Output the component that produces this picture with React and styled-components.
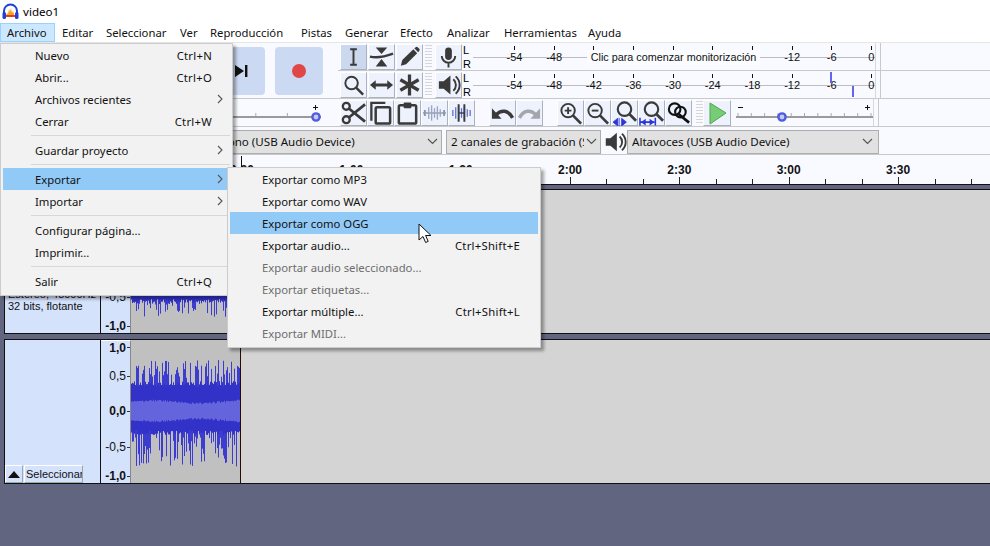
import React from "react";
import styled, { createGlobalStyle } from "styled-components";

const UI = '"Noto Sans", "Open Sans", sans-serif';
const ARIAL = '"Liberation Sans", Arial, sans-serif';

const Global = createGlobalStyle`
  html, body { margin: 0; padding: 0; background: #62657f; }
  * { box-sizing: border-box; }
`;

const Page = styled.div`
  position: relative; width: 990px; height: 546px; overflow: hidden;
  font-family: ${UI}; font-size: 11.3px; color: #111; background: #62657f;
`;
const TitleBar = styled.div`
  height: 22px; background: #fff; display: flex; align-items: center; gap: 4px; padding-left: 2px; font-size: 11.6px; color: #000;
`;
const MenuBar = styled.div`
  height: 21px; background: #fff; display: flex; align-items: flex-start; padding-top: 1px; border-bottom: 1px solid #e6e6e6;
`;
const MenuItem = styled.div`
  width: ${p => p.$w}px; flex: none; height: 19px; line-height: 19px; padding-left: 7px; white-space: nowrap;
  outline: ${p => (p.$open ? "1px solid #99d1ff" : "none")};
  outline-offset: -1px;
  background: ${p => (p.$open ? "#cce8ff" : "transparent")};
`;

const Dock = styled.div`
  display: grid; grid-template-columns: 338px 1fr; grid-template-rows: 28px 28px 28px 28px;
  background: #f8faff;
`;
const Transport = styled.div`
  grid-row: 1 / 3; display: flex; justify-content: flex-end; align-items: flex-start; gap: 10px;
  padding: 4px 15px 0 0; border-bottom: 1px solid #c9c9c9;
`;
const TransportBtn = styled.div`
  width: 48px; height: 48px; border-radius: 4px; background: #ccd9f2;
  display: flex; align-items: center; justify-content: center;
`;
const GainCell = styled.div`
  display: flex; justify-content: flex-end; align-items: stretch; border-bottom: 1px solid #c9c9c9; padding-right: 17px;
`;
const DockRow = styled.div`
  display: flex; align-items: center; padding-left: 2px; border-bottom: 1px solid #c9c9c9; position: relative;
`;
const DeviceRow = styled.div`
  grid-column: 1 / 3; display: flex; align-items: center; padding: 2px 0 0 188px; border-bottom: 1px solid #c9c9c9;
`;
const ToolBtn = styled.div`
  width: ${p => p.$w || 27}px; height: 26px; flex: none; display: flex; align-items: center; justify-content: center;
  background: ${p => (p.$active ? "#cbd8ee" : "#edf2fc")};
  border: 1px solid; border-color: #fff #aab2c0 #aab2c0 #fff;
  margin-right: ${p => p.$mr || 0}px;
`;
const Grip = styled.div`
  width: ${p => p.$w || 7}px; height: 24px; flex: none; margin: 0 ${p => p.$mr ?? 3}px 0 ${p => p.$ml ?? 1}px;
  background: repeating-linear-gradient(to bottom, #d4d6da 0 1px, transparent 1px 3px);
`;
const LR = styled.div`
  width: 11px; height: 28px; flex: none; font: 11px/14px ${ARIAL}; color: #000; padding-left: 1px;
`;
const Meter = styled.div`
  position: relative; width: 402px; height: 27px; flex: none; display: flex; justify-content: space-between;
  padding: 3px 3px 0 41px;
  &::before { content: ""; position: absolute; left: 0; right: 0; top: 14px; height: 1px; background: #bdbdbd; }
`;
const MeterTick = styled.div`
  position: relative; width: 1px; height: 4px; background: #111; flex: none;
`;
const MeterLabel = styled.span`
  position: absolute; left: 50%; top: 5px; transform: translateX(-50%); font: 11px/13px ${ARIAL}; color: #111; white-space: nowrap;
`;
const MonitorBox = styled.div`
  position: absolute; left: 114px; top: 7px; width: 173px; height: 15px; background: #fbfcff;
  text-align: center; font: 10.8px/14px ${ARIAL}; color: #111; white-space: nowrap;
`;
const Peak = styled.div`
  position: absolute; width: 2px; height: 11px; background: #6464ec;
`;
const DockEnd = styled.div`
  width: 6px; align-self: stretch; flex: none; border-right: 1px solid #c9c9c9; border-left: 1px solid #d8d8d8;
`;
const Select = styled.div`
  height: 24px; width: ${p => p.$w}px; flex: none; margin-right: ${p => p.$mr || 0}px; padding: 0 ${p => p.$pr || 3}px 0 4px;
  background: #e1e1e1; border: 1px solid #adadad; display: flex; justify-content: space-between; align-items: center;
  white-space: nowrap; overflow: hidden; font-size: 11.6px;
  & > svg { flex: none; }
`;
const SelectText = styled.span` overflow: hidden; flex: 1; min-width: 0; margin-right: 2px; `;
const SliderWrap = styled.div`
  width: ${p => p.$w}px; flex: none; height: 27px; margin-left: ${p => p.$ml || 0}px;
`;

const Ruler = styled.div`
  position: relative; height: 29px; background: #f8faff;
`;
const RulerLabel = styled.span`
  position: absolute; top: 8px; transform: translateX(-50%); font: bold 12px/15px ${ARIAL}; color: #111;
`;
const RulerTick = styled.i`
  position: absolute; bottom: 0; width: 1px; height: ${p => (p.$major ? 7 : 5)}px; background: #222;
`;
const RulerCursor = styled.i`
  position: absolute; left: 241px; top: 1px; width: 1px; height: 11px; background: #111;
`;
const Tracks = styled.div`
  border-top: 1px solid #111; padding: 4px 0 0 4px; background: #62657f;
`;
const Track = styled.div`
  display: flex; height: ${p => p.$h}px; background: #d4d4d4; border: solid #111; border-width: 1px 0 1px 1px;
  margin-bottom: 5px;
`;
const Panel = styled.div`
  width: 96px; flex: none; background: #d4e2fc; border-right: 1px solid #111; display: flex; flex-direction: column;
  justify-content: flex-end; font: 11px/12px ${ARIAL}; color: #111;
`;
const PanelInfo = styled.div`
  flex: 1; padding: 98px 0 0 3px; white-space: nowrap;
`;
const PanelFoot = styled.div`
  display: flex; height: 18px; gap: 1px;
`;
const Collapse = styled.div`
  width: 18px; background: #d4e2fc; border: 1px solid; border-color: #fff #9aa #9aa #fff;
  display: flex; align-items: center; justify-content: center;
`;
const SelectBtn = styled.div`
  width: 59px; background: #d4e2fc; border: 1px solid; border-color: #fff #9aa #9aa #fff;
  font: 11px/16px ${ARIAL}; padding-left: 1px; overflow: hidden; white-space: nowrap;
`;
const Scale = styled.div`
  width: 30px; flex: none; background: #d4e2fc; border-right: 1px solid #888; border-top: 1px solid #fff;
  display: grid; grid-template-rows: 13px 44px 26px 46px 12px;
`;
const ScaleLabel = styled.div`
  display: flex; align-items: center; justify-content: flex-end; font: ${p => (p.$bold ? "bold" : "normal")} 12px/14px ${ARIAL};
  color: #111; white-space: nowrap;
  &::after { content: ""; width: 3px; height: 1px; background: #333; margin-left: 1px; flex: none; }
`;
const Clip = styled.div`
  width: 110px; flex: none; background: #c0c0c0; border-right: 1px solid #2a0a0a; overflow: hidden;
`;
const Overlay = styled.div`
  position: absolute; left: ${p => p.$x}px; top: ${p => p.$y}px; width: ${p => p.$w}px; z-index: ${p => p.$z || 5};
  background: #f2f2f2; border: 1px solid #cccccc; padding: 0 2px 3px; box-shadow: 3px 3px 3px rgba(0,0,0,.35);
`;
const Row = styled.div`
  display: grid; grid-template-columns: ${p => p.$text}px 1fr ${p => p.$tail}px; align-items: center; height: 22px;
  padding-left: ${p => p.$pad}px; background: ${p => (p.$hi ? "#91c9f7" : "transparent")};
  color: ${p => (p.$off ? "#6d6d6d" : "#111")}; white-space: nowrap;
`;
const Shortcut = styled.span` text-align: right; letter-spacing: .25px; `;
const Arrow = styled.span` display: flex; justify-content: flex-end; padding-right: 7px; `;
const Separator = styled.div`
  height: 1px; background: #d7d7d7; margin: 3px 0 3px 28px;
`;
const Cursor = styled.svg`
  position: absolute; left: 418px; top: 223px; z-index: 9;
`;

const INK = "#3a3a3a";
const Svg = ({ children, s = 26 }) => <svg width={s} height={s} viewBox="0 0 26 26">{children}</svg>;

const AppIcon = () => (
  <svg width="17" height="17" viewBox="0 0 17 17">
    <path d="M2 11V8a6.5 6.5 0 0 1 13 0v3" fill="none" stroke="#1f3fd6" strokeWidth="2" />
    <rect x="0.5" y="9" width="3.5" height="7" rx="1.5" fill="#1f3fd6" />
    <rect x="13" y="9" width="3.5" height="7" rx="1.5" fill="#1f3fd6" />
    <path d="M4 13l1-3 1 1 1-5 1 3 1-4 1 5 1-2 1 3v3H4z" fill="#f2a01e" />
    <rect x="4" y="12" width="9" height="2" fill="#e2401c" />
  </svg>
);
const IBeam = () => <Svg><path d="M9.5 5h7M13 5v16M9.5 21h7" stroke={INK} strokeWidth="2" fill="none" /></Svg>;
const Envelope = () => (
  <Svg>
    <path d="M7 3h12l-6 7zM13 15l6 8H7z" fill={INK} />
    <path d="M1 12.5c8 2 16 0 24-3" stroke={INK} strokeWidth="2.4" fill="none" />
  </Svg>
);
const Pencil = () => <Svg><path d="M4 22l1.5-6L17 5l4 4L9.5 20.5zM18 4l1.5-1.2a1.5 1.5 0 0 1 2 0l1.7 1.7a1.5 1.5 0 0 1 0 2L22 8z" fill={INK} /></Svg>;
const Lens = () => <Svg><circle cx="11" cy="11" r="6.5" fill="none" stroke={INK} strokeWidth="2" /><path d="M16 16l7 7" stroke={INK} strokeWidth="2.6" /></Svg>;
const Shift = () => <Svg><path d="M1 13l6-5v3.5h12V8l6 5-6 5v-3.5H7V18z" fill={INK} /></Svg>;
const Star = () => <Svg><path d="M13 2v22M3.5 7.5l19 11M22.5 7.5l-19 11" stroke={INK} strokeWidth="3.4" /></Svg>;
const Mic = () => <Svg><rect x="9.5" y="3" width="7" height="13" rx="3.5" fill={INK} /><path d="M6 12a7 7 0 0 0 14 0M13 19v5" stroke={INK} strokeWidth="2" fill="none" /></Svg>;
const Speaker = ({ s = 26 }) => <Svg s={s}><path d="M3 9h5l7-6v20l-7-6H3z" fill={INK} /><path d="M18 7a8 8 0 0 1 0 12M20.5 4a12 12 0 0 1 0 18" stroke={INK} strokeWidth="2" fill="none" /></Svg>;
const Scissors = () => <Svg><circle cx="5.5" cy="6" r="3.6" fill="none" stroke={INK} strokeWidth="2.4" /><circle cx="5.5" cy="20" r="3.6" fill="none" stroke={INK} strokeWidth="2.4" /><path d="M8.5 8.5L25 22M8.5 17.5L25 4" stroke={INK} strokeWidth="2.8" /></Svg>;
const Copy = () => <Svg><path d="M3.5 21V2.5H18" fill="none" stroke={INK} strokeWidth="2.4" /><rect x="8" y="7" width="15" height="17" rx="1.5" fill="none" stroke={INK} strokeWidth="2.6" /></Svg>;
const Paste = () => <Svg><rect x="4" y="5" width="18" height="19" rx="1.5" fill="none" stroke={INK} strokeWidth="2.6" /><rect x="9" y="2" width="8" height="6" rx="1" fill={INK} /></Svg>;
const bars = [[4, 3], [7, 6], [10, 8], [13, 5], [16, 7], [19, 4], [22, 3]];
const Silence = () => (
  <Svg>
    <path d="M1 13h24" stroke="#8f98a8" strokeWidth="1.5" />
    {bars.slice(1, 6).map(([x, h]) => <path key={x} d={`M${x} ${13 - h}v${2 * h}`} stroke="#9aa6c4" strokeWidth="1.4" />)}
    <path d="M3 10v6M23 10v6" stroke="#8f98a8" strokeWidth="2" />
  </Svg>
);
const Trim = () => (
  <Svg>
    {bars.map(([x, h]) => <path key={x} d={`M${x} ${13 - h}v${2 * h}`} stroke="#5a6ad8" strokeWidth="1.3" />)}
    <path d="M10 13h6" stroke={INK} strokeWidth="1.4" />
    <path d="M10 4v18M16 4v18" stroke={INK} strokeWidth="2" />
  </Svg>
);
const Undo = ({ c = INK, flip }) => (
  <Svg>
    <g transform={flip ? "translate(26 0) scale(-1 1)" : undefined}>
      <path d="M2 8v11h10z" fill={c} />
      <path d="M6 15c6-6 13-5 17.5 3" fill="none" stroke={c} strokeWidth="3.6" />
    </g>
  </Svg>
);
const ZoomMark = ({ plus }) => (
  <Svg>
    <circle cx="10.5" cy="10.5" r="7" fill="none" stroke={INK} strokeWidth="2" />
    <path d="M15.5 15.5L24 24" stroke={INK} strokeWidth="2.8" />
    <path d={plus ? "M7 10.5h7M10.5 7v7" : "M7 10.5h7"} stroke={INK} strokeWidth="2" />
  </Svg>
);
const FitSel = () => (
  <Svg>
    <circle cx="13" cy="9" r="7" fill="none" stroke={INK} strokeWidth="2.2" />
    <path d="M18 14l7 7" stroke={INK} strokeWidth="2.8" />
    <path d="M1 22.5l5-4v8zM15 22.5l-5-4v8zM7.5 18v8.5" fill="#2d35d8" stroke="#2d35d8" strokeWidth="0.8" />
  </Svg>
);
const FitProject = () => (
  <Svg>
    <circle cx="13" cy="9" r="7" fill="none" stroke={INK} strokeWidth="2.2" />
    <path d="M18 14l7 7" stroke={INK} strokeWidth="2.8" />
    <path d="M1 18v8M17 18v8M1 22.5h15" stroke="#2d35d8" strokeWidth="1.6" />
    <path d="M2 22.5l5-3.5v7zM16 22.5l-5-3.5v7z" fill="#2d35d8" />
  </Svg>
);
const ZoomToggle = () => (
  <Svg>
    <circle cx="9" cy="9" r="6" fill="none" stroke="#111" strokeWidth="2.2" />
    <circle cx="15" cy="12" r="5.5" fill="none" stroke="#111" strokeWidth="2.2" />
    <path d="M13 14l11 9" stroke="#111" strokeWidth="2.8" />
  </Svg>
);
const Play = () => <Svg><path d="M6 3l16 10L6 24z" fill="#76cd76" stroke="#52a452" /></Svg>;
const Chevron = ({ c = "#555" }) => <svg width="11" height="7" viewBox="0 0 11 7"><path d="M1 1l4.5 4.5L10 1" fill="none" stroke={c} strokeWidth="1.2" /></svg>;
const MenuChevron = () => <svg width="6" height="10" viewBox="0 0 6 10"><path d="M1 1l4 4-4 4" fill="none" stroke="#555" strokeWidth="1.1" /></svg>;

const Slider = ({ w, thumb, minus }) => {
  const ticks = Array.from({ length: 11 }, (_, i) => 2 + i * ((w - 4) / 10));
  return (
    <svg width={w} height="27" viewBox={`0 0 ${w} 27`}>
      {minus && <path d="M2 8.5h5" stroke="#111" />}
      <path d={`M${w - 8} 8.5h5M${w - 5.5} 6v5`} stroke="#111" />
      {ticks.map(x => <path key={x} d={`M${x} 14v3`} stroke="#aaa" />)}
      <path d={`M0 18h${w}`} stroke="#9a9a9a" strokeWidth="2" />
      <circle cx={thumb} cy="18" r="3.6" fill="#c4c8f0" stroke="#4f5be0" strokeWidth="2.4" />
    </svg>
  );
};

const rand = seed => {
  let s = seed;
  return () => {
    s = (s * 1664525 + 1013904223) % 4294967296;
    return s / 4294967296;
  };
};
const Wave = ({ seed, bodyDown }) => {
  const r = rand(seed);
  const c = 71;
  let spikes = "";
  let solid = "";
  let core = "";
  for (let x = 0; x < 110; x++) {
    const up = r() > 0.5 ? 33 + r() * 18 : 26;
    const down = r() > 0.5 ? 25 + r() * 31 : 20;
    spikes += `M${x + 0.5} ${c - up}V${c + down}`;
    const top = 24 + r() * 6;
    const bottom = bodyDown + r() * 5;
    solid += `M${x + 0.5} ${c - top}V${c + bottom}`;
    const k = 8 + r() * 2 + 1.5 * Math.sin(x / 14);
    core += `M${x + 0.5} ${c - k}V${c + k}`;
  }
  return (
    <svg width="109" height="143" viewBox="0 0 109 143" style={{ display: "block" }}>
      <path d={spikes} stroke="#3c3cd0" strokeWidth="1" />
      <path d={solid} stroke="#3232c8" strokeWidth="1" />
      <path d={core} stroke="#6464dc" strokeWidth="1" />
    </svg>
  );
};

const dbLabels = ["-54", "-48", "-42", "-36", "-30", "-24", "-18", "-12", "-6", "0"];
const behindBox = ["-42", "-36", "-30", "-24", "-18"];
const menuNames = [
  ["Editar", 44], ["Seleccionar", 74], ["Ver", 30], ["Reproducción", 91], ["Pistas", 44], ["Generar", 55], ["Efecto", 47], ["Analizar", 57], ["Herramientas", 84], ["Ayuda", 60],
];
const fileMenu = [
  { t: "Nuevo", k: "Ctrl+N" },
  { t: "Abrir...", k: "Ctrl+O" },
  { t: "Archivos recientes", sub: true },
  { t: "Cerrar", k: "Ctrl+W" },
  { sep: true },
  { t: "Guardar proyecto", sub: true },
  { sep: true },
  { t: "Exportar", sub: true, hi: true },
  { t: "Importar", sub: true },
  { sep: true },
  { t: "Configurar página..." },
  { t: "Imprimir..." },
  { sep: true },
  { t: "Salir", k: "Ctrl+Q" },
];
const exportMenu = [
  { t: "Exportar como MP3" },
  { t: "Exportar como WAV" },
  { t: "Exportar como OGG", hi: true },
  { t: "Exportar audio...", k: "Ctrl+Shift+E" },
  { t: "Exportar audio seleccionado...", off: true },
  { t: "Exportar etiquetas...", off: true },
  { t: "Exportar múltiple...", k: "Ctrl+Shift+L" },
  { t: "Exportar MIDI...", off: true },
];
const scaleLabels = [["1,0", true], ["0,5"], ["0,0", true], ["-0,5"], ["-1,0", true]];
const ORIGIN = 132.6;
const STEP = 36.45;
const rulerMarks = Array.from({ length: 24 }, (_, i) => i);
const timeLabel = i => {
  if (i % 3 !== 0 || i === 0) return "";
  const sec = i * 10;
  return `${Math.floor(sec / 60)}:${String(sec % 60).padStart(2, "0")}`;
};

const MeterRow = ({ monitor, peaks }) => (
  <Meter>
    {dbLabels.map(d => (
      <MeterTick key={d}>{!(monitor && behindBox.includes(d)) && <MeterLabel>{d}</MeterLabel>}</MeterTick>
    ))}
    {monitor && <MonitorBox>Clic para comenzar monitorización</MonitorBox>}
    {peaks && <Peak style={{ left: 357, top: 1 }} />}
    {peaks && <Peak style={{ left: 379, top: 15 }} />}
  </Meter>
);

const TrackView = ({ h, seed, bodyDown, foot }) => (
  <Track $h={h}>
    <Panel>
      {foot
        ? (
          <PanelFoot>
            <Collapse><svg width="12" height="7" viewBox="0 0 12 7"><path d="M6 0l6 7H0z" fill="#111" /></svg></Collapse>
            <SelectBtn>Seleccionar</SelectBtn>
          </PanelFoot>
        )
        : <PanelInfo>Estéreo, 48000Hz<br />32 bits, flotante</PanelInfo>}
    </Panel>
    <Scale>
      {scaleLabels.map(([t, b]) => <ScaleLabel key={t} $bold={b}>{t}</ScaleLabel>)}
    </Scale>
    <Clip><Wave seed={seed} bodyDown={bodyDown} /></Clip>
  </Track>
);

export default function App() {
  return (
    <Page>
      <Global />
      <TitleBar><AppIcon />video1</TitleBar>
      <MenuBar>
        <MenuItem $open $w={55}>Archivo</MenuItem>
        {menuNames.map(([n, w]) => <MenuItem key={n} $w={w}>{n}</MenuItem>)}
      </MenuBar>
      <Dock>
        <Transport>
          <TransportBtn>
            <svg width="16" height="16" viewBox="0 0 16 16"><path d="M2 2l9 6-9 6zM12 2h2.4v12H12z" fill="#111" /></svg>
          </TransportBtn>
          <TransportBtn>
            <svg width="14" height="14" viewBox="0 0 14 14"><circle cx="7" cy="7" r="7" fill="#e04848" /></svg>
          </TransportBtn>
        </Transport>
        <DockRow>
          <ToolBtn $active $mr={1}><IBeam /></ToolBtn>
          <ToolBtn $mr={1}><Envelope /></ToolBtn>
          <ToolBtn><Pencil /></ToolBtn>
          <Grip $ml={2} />
          <ToolBtn><Mic /></ToolBtn>
          <LR>L<br />R</LR>
          <MeterRow monitor />
          <DockEnd />
        </DockRow>
        <DockRow>
          <ToolBtn $mr={1}><Lens /></ToolBtn>
          <ToolBtn $mr={1}><Shift /></ToolBtn>
          <ToolBtn><Star /></ToolBtn>
          <Grip $ml={2} />
          <ToolBtn><Speaker /></ToolBtn>
          <LR>L<br />R</LR>
          <MeterRow peaks />
          <DockEnd />
        </DockRow>
        <GainCell><SliderWrap $w={320}><Slider w={320} thumb={315} /></SliderWrap></GainCell>
        <DockRow>
          <ToolBtn><Scissors /></ToolBtn>
          <ToolBtn><Copy /></ToolBtn>
          <ToolBtn><Paste /></ToolBtn>
          <ToolBtn><Silence /></ToolBtn>
          <ToolBtn $mr={14}><Trim /></ToolBtn>
          <ToolBtn><Undo /></ToolBtn>
          <ToolBtn $mr={14}><Undo c="#a3a7ad" flip /></ToolBtn>
          <ToolBtn><ZoomMark plus /></ToolBtn>
          <ToolBtn><ZoomMark /></ToolBtn>
          <ToolBtn><FitSel /></ToolBtn>
          <ToolBtn><FitProject /></ToolBtn>
          <ToolBtn><ZoomToggle /></ToolBtn>
          <Grip $ml={4} $mr={0} />
          <ToolBtn $w={28}><Play /></ToolBtn>
          <SliderWrap $w={137} $ml={5}><Slider w={137} thumb={46} minus /></SliderWrap>
          <DockEnd />
        </DockRow>
        <DeviceRow>
          <Select $w={254} $mr={4}><SelectText>Micrófono (USB Audio Device)</SelectText><Chevron /></Select>
          <Select $w={155} $mr={2}><SelectText>2 canales de grabación (S</SelectText><Chevron /></Select>
          <Speaker s={24} />
          <Select $w={252} $pr={5}><SelectText>Altavoces (USB Audio Device)</SelectText><Chevron /></Select>
        </DeviceRow>
      </Dock>
      <Ruler>
        <RulerCursor />
        {rulerMarks.map(i => {
          const x = ORIGIN + i * STEP;
          const label = timeLabel(i);
          return (
            <React.Fragment key={i}>
              <RulerTick $major={!!label} style={{ left: x }} />
              {label && <RulerLabel style={{ left: x }}>{label}</RulerLabel>}
            </React.Fragment>
          );
        })}
      </Ruler>
      <Tracks>
        <TrackView h={145} seed={11} bodyDown={38} />
        <TrackView h={145} seed={77} bodyDown={19} foot />
      </Tracks>

      <Overlay $x={0} $y={43} $w={233}>
        {fileMenu.map((m, i) => m.sep
          ? <Separator key={i} />
          : (
            <Row key={m.t} $pad={32} $text={120} $tail={18} $hi={m.hi}>
              <span>{m.t}</span>
              <Shortcut>{m.k}</Shortcut>
              <Arrow>{m.sub && <MenuChevron />}</Arrow>
            </Row>
          ))}
      </Overlay>
      <Overlay $x={227} $y={167} $w={314} $z={6}>
        {exportMenu.map(m => (
          <Row key={m.t} $pad={32} $text={190} $tail={18} $hi={m.hi} $off={m.off}>
            <span>{m.t}</span>
            <Shortcut>{m.k}</Shortcut>
            <span />
          </Row>
        ))}
      </Overlay>
      <Cursor width="14" height="22" viewBox="0 0 14 22">
        <path d="M1 1v16l4-3.5 2.6 6 2.6-1.1-2.6-5.9H13z" fill="#fff" stroke="#111" strokeWidth="1" />
      </Cursor>
    </Page>
  );
}
